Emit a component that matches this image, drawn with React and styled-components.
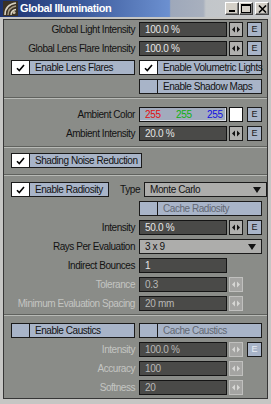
import React from 'react';
import styled, { createGlobalStyle } from 'styled-components';

const GlobalStyle = createGlobalStyle`
  html, body { margin: 0; padding: 0; background: #c6c6c6; }
  body { font-family: "Liberation Sans", Arial, sans-serif; }
  * { box-sizing: border-box; }
`;

const Window = styled.div`
  width: 271px;
  height: 404px;
  background: #c6c6c4;
  display: flex;
  flex-direction: column;
`;

const TitleBar = styled.div`
  height: 17px;
  flex: none;
  display: flex;
  align-items: center;
  padding: 0 2px 0 3px;
  background: linear-gradient(90deg, #1c3270 0%, #3c5a9c 30%, #5a7cbc 50%, #6c90d0 62.5%, #9ea8ba 63%, #a8b0be 75%, #c2c6ca 76%, #c8cacc 100%);
`;

const TitleText = styled.div`
  flex: 1;
  margin-left: 2px;
  color: #ffffff;
  font-weight: bold;
  font-size: 11px;
  letter-spacing: -0.4px;
  line-height: 17px;
  white-space: nowrap;
`;

const WinBtn = styled.div`
  width: 14px;
  height: 13px;
  margin-left: ${p => p.$gap || 0}px;
  background: #d4d0c8;
  border-top: 1px solid #ffffff;
  border-left: 1px solid #ffffff;
  border-right: 1px solid #404040;
  border-bottom: 1px solid #404040;
  box-shadow: inset -1px -1px 0 #808080;
  display: flex;
  align-items: center;
  justify-content: center;
`;

const Frame = styled.div`
  flex: 1;
  display: flex;
  padding: 2px 3px 5px 3px;
`;

const Panel = styled.div`
  flex: 1;
  border: 1px solid #363636;
  background: #8a8c88;
  display: flex;
  flex-direction: column;
`;

const Section = styled.div`
  display: flex;
  flex-direction: column;
  gap: 4px;
  padding-top: ${p => p.$pt}px;
  padding-bottom: ${p => p.$pb}px;
  flex: ${p => (p.$grow ? 1 : 'none')};
`;

const Sep = styled.div`
  height: 2px;
  flex: none;
  border-top: 1px solid #60625e;
  border-bottom: 1px solid #b8bab6;
`;

const Row = styled.div`
  display: flex;
  align-items: stretch;
  height: 15px;
  padding-left: ${p => p.$indent || 0}px;
`;

const Label = styled.div`
  width: 131px;
  flex: none;
  margin-right: 4px;
  text-align: right;
  font-size: 10px;
  letter-spacing: -0.45px;
  line-height: 15px;
  white-space: nowrap;
  color: ${p => (p.$dim ? '#c4c5c2' : '#121212')};
`;

const InlineLabel = styled(Label)`
  width: auto;
  flex: 1 1 0;
  min-width: 0;
`;

const Field = styled.div`
  width: 88px;
  height: 15px;
  flex: none;
  background: #4a4a48;
  border: 1px solid #141414;
  padding-left: 5px;
  font-size: 10px;
  letter-spacing: -0.3px;
  line-height: 13px;
  white-space: nowrap;
  color: ${p => (p.$dim ? '#b8b8b6' : '#e6e6e6')};
`;

const ColorField = styled.div`
  width: 88px;
  height: 15px;
  flex: none;
  background: #a2abbd;
  border: 1px solid #141414;
  box-shadow: inset -1px -1px 0 #d8dce4;
  padding-left: 5px;
  display: grid;
  grid-template-columns: 31px 31px 1fr;
  font-size: 10px;
  letter-spacing: -0.3px;
  line-height: 13px;
`;

const Channel = styled.span`
  color: ${p => p.$c};
`;

const Swatch = styled.div`
  width: 14px;
  margin-left: 2px;
  flex: none;
  background: #ffffff;
  border: 1px solid #141414;
`;

const Spin = styled.div`
  width: 14px;
  margin-left: 2px;
  flex: none;
  background: ${p => (p.$dim ? '#a4a4a2' : '#b0b0ae')};
  border: 1px solid ${p => (p.$dim ? '#c0c0be' : '#1a1a1a')};
  display: flex;
  align-items: center;
  justify-content: center;
`;

const Env = styled.div`
  width: 15px;
  margin-left: 4px;
  flex: none;
  background: #a8b4c8;
  border: 1px solid #1a1a1a;
  display: flex;
  align-items: center;
  justify-content: center;
  font-size: 9px;
  line-height: 13px;
  color: ${p => (p.$dim ? '#e8ecf2' : '#1a1a1a')};
`;

const CheckBtn = styled.div`
  width: ${p => p.$w}px;
  margin-right: ${p => p.$mr || 0}px;
  flex: none;
  display: flex;
  background: #a8b4c8;
  border: 1px solid #1a1a1a;
`;

const Box = styled.div`
  width: 18px;
  flex: none;
  border-right: 1px solid #1a1a1a;
  background: ${p => (p.$checked ? '#ffffff' : 'transparent')};
  display: flex;
  align-items: center;
  justify-content: center;
`;

const BtnText = styled.div`
  padding-left: 5px;
  font-size: 10px;
  letter-spacing: -0.45px;
  line-height: 13px;
  white-space: nowrap;
  color: ${p => (p.$dim ? '#626873' : '#121212')};
`;

const Select = styled.div`
  width: 123px;
  flex: none;
  background: #adadab;
  border: 1px solid #1a1a1a;
  padding: 0 5px 0 5px;
  display: flex;
  align-items: center;
  justify-content: space-between;
  font-size: 10px;
  letter-spacing: -0.4px;
  color: #121212;
  white-space: nowrap;
`;

const Check = () => (
  <svg width="9" height="8" viewBox="0 0 9 8">
    <path d="M1 4.2 L3.3 6.5 L8 1" fill="none" stroke="#000" strokeWidth="1.6" />
  </svg>
);

const SpinIcon = ({ dim }) => (
  <svg width="8" height="7" viewBox="0 0 8 7">
    <polygon points="0,3.5 3,0.5 3,6.5" fill={dim ? '#d6d6d4' : '#111'} />
    <polygon points="5,0.5 8,3.5 5,6.5" fill={dim ? '#d6d6d4' : '#111'} />
  </svg>
);

const Arrow = () => (
  <svg width="8" height="6" viewBox="0 0 8 6">
    <polygon points="0,0 8,0 4,6" fill="#111" />
  </svg>
);

const AppIcon = () => (
  <svg width="15" height="15" viewBox="0 0 15 15">
    <rect width="15" height="15" fill="#3a3226" />
    <path d="M2 14 C2 7 6 3 13 2" fill="none" stroke="#d8d2c2" strokeWidth="1.6" />
    <path d="M5 14 C5 9 8 6 13 5" fill="none" stroke="#a89c84" strokeWidth="1.4" />
    <path d="M8 14 C8 11 10 9 13 8.5" fill="none" stroke="#e6e0d0" strokeWidth="1.3" />
    <circle cx="11" cy="11.5" r="1.6" fill="#c8bea8" />
  </svg>
);

const MinGlyph = () => (
  <svg width="8" height="9" viewBox="0 0 8 9">
    <rect x="1" y="6" width="6" height="2" fill="#000" />
  </svg>
);
const MaxGlyph = () => (
  <svg width="10" height="9" viewBox="0 0 10 9">
    <rect x="0.5" y="0.5" width="9" height="8" fill="none" stroke="#000" />
    <rect x="0" y="0" width="10" height="2" fill="#000" />
  </svg>
);
const CloseGlyph = () => (
  <svg width="9" height="8" viewBox="0 0 9 8">
    <path d="M1 0.5 L8 7.5 M8 0.5 L1 7.5" stroke="#000" strokeWidth="1.6" />
  </svg>
);

const ValueRow = ({ label, value, dim, spin = true, env = false, envDim }) => (
  <Row>
    <Label $dim={dim}>{label}</Label>
    <Field $dim={dim}>{value}</Field>
    {spin && (
      <Spin $dim={dim}>
        <SpinIcon dim={dim} />
      </Spin>
    )}
    {env && <Env $dim={envDim}>E</Env>}
  </Row>
);

const CheckButton = ({ w, checked, text, dim, mr }) => (
  <CheckBtn $w={w} $mr={mr}>
    <Box $checked={checked}>{checked && <Check />}</Box>
    <BtnText $dim={dim}>{text}</BtnText>
  </CheckBtn>
);

export default function App() {
  return (
    <>
      <GlobalStyle />
      <Window>
        <TitleBar>
          <AppIcon />
          <TitleText>Global Illumination</TitleText>
          <WinBtn><MinGlyph /></WinBtn>
          <WinBtn><MaxGlyph /></WinBtn>
          <WinBtn $gap={2}><CloseGlyph /></WinBtn>
        </TitleBar>
        <Frame>
          <Panel>
            <Section $pt={2} $pb={3}>
              <ValueRow label="Global Light Intensity" value="100.0 %" env />
              <ValueRow label="Global Lens Flare Intensity" value="100.0 %" env />
              <Row $indent={7}>
                <CheckButton w={124} mr={4} checked text="Enable Lens Flares" />
                <CheckButton w={123} checked text="Enable Volumetric Lights" />
              </Row>
              <Row $indent={135}>
                <CheckButton w={123} text="Enable Shadow Maps" />
              </Row>
            </Section>
            <Sep />
            <Section $pt={8} $pb={5}>
              <Row>
                <Label>Ambient Color</Label>
                <ColorField>
                  <Channel $c="#e01010">255</Channel>
                  <Channel $c="#10b010">255</Channel>
                  <Channel $c="#1010e0">255</Channel>
                </ColorField>
                <Swatch />
                <Env>E</Env>
              </Row>
              <ValueRow label="Ambient Intensity" value="20.0 %" env />
            </Section>
            <Sep />
            <Section $pt={5} $pb={6}>
              <Row $indent={7}>
                <CheckButton w={131} checked text="Shading Noise Reduction" />
              </Row>
            </Section>
            <Sep />
            <Section $pt={6} $pb={3}>
              <Row $indent={7}>
                <CheckButton w={98} checked text="Enable Radiosity" />
                <InlineLabel>Type</InlineLabel>
                <Select>
                  <span>Monte Carlo</span>
                  <Arrow />
                </Select>
              </Row>
              <Row $indent={135}>
                <CheckButton w={123} dim text="Cache Radiosity" />
              </Row>
              <ValueRow label="Intensity" value="50.0 %" env />
              <Row>
                <Label>Rays Per Evaluation</Label>
                <Select>
                  <span>3 x 9</span>
                  <Arrow />
                </Select>
              </Row>
              <ValueRow label="Indirect Bounces" value="1" spin={false} />
              <ValueRow label="Tolerance" value="0.3" dim />
              <ValueRow label="Minimum Evaluation Spacing" value="20 mm" dim />
            </Section>
            <Sep />
            <Section $pt={7} $pb={2} $grow>
              <Row $indent={7}>
                <CheckButton w={124} mr={4} text="Enable Caustics" />
                <CheckButton w={123} dim text="Cache Caustics" />
              </Row>
              <ValueRow label="Intensity" value="100.0 %" dim env envDim />
              <ValueRow label="Accuracy" value="100" dim />
              <ValueRow label="Softness" value="20" dim />
            </Section>
          </Panel>
        </Frame>
      </Window>
    </>
  );
}
